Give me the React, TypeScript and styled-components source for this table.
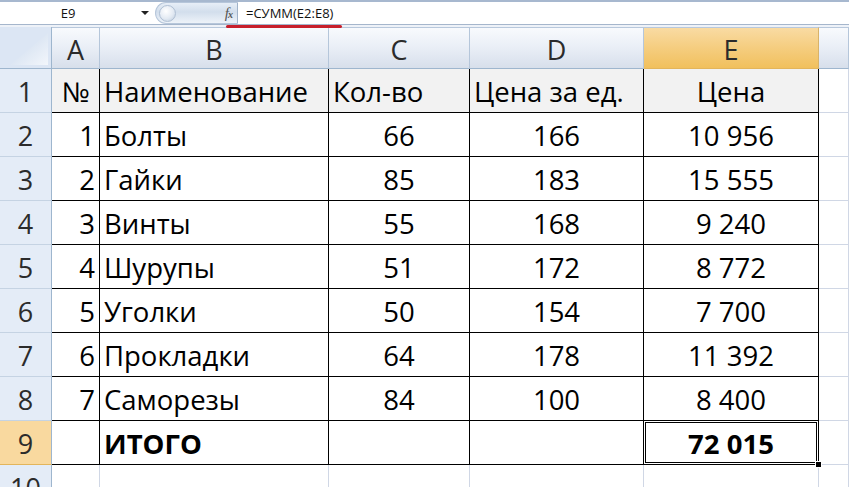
import React from "react";
import styled, { createGlobalStyle, css } from "styled-components";

const Global = createGlobalStyle`
  html, body { margin: 0; padding: 0; background: #fff; overflow: hidden; }
  #root { width: 849px; height: 487px; overflow: hidden; }
`;

const CELL_FONT = `"Open Sans", "Noto Sans", "DejaVu Sans", sans-serif`;
const UI_FONT = `"Open Sans", "Noto Sans", sans-serif`;

const Page = styled.div`
  width: 849px;
  height: 487px;
  display: flex;
  flex-direction: column;
  position: relative;
  overflow: hidden;
  background: #fff;
`;

const FormulaBar = styled.div`
  height: 25px;
  box-sizing: border-box;
  display: flex;
  align-items: stretch;
  border-top: 2px solid #a7b8cf;
  border-bottom: 1px solid #a5b6cc;
  background: #fff;
  flex-shrink: 0;
`;

const NameBox = styled.div`
  width: 136px;
  display: flex;
  align-items: center;
  justify-content: center;
  font-family: ${UI_FONT};
  font-size: 13px;
  color: #111;
`;

const DropArrow = styled.div`
  width: 18px;
  display: flex;
  align-items: center;
  justify-content: center;
  &::after {
    content: "";
    border-left: 4px solid transparent;
    border-right: 4px solid transparent;
    border-top: 4px solid #222;
  }
`;

const FxPill = styled.div`
  width: 83px;
  margin: 0 0 0 1px;
  box-sizing: border-box;
  border-radius: 12px 0 0 12px;
  border: 1px solid #b6c6da;
  border-right: 1px solid #9fb2c9;
  background: linear-gradient(to bottom, #e7eef7 0%, #d2deec 45%, #eef3f9 100%);
  display: flex;
  align-items: center;
  justify-content: space-between;
  padding: 0 5px 0 3px;
`;

const Knob = styled.div`
  width: 15px;
  height: 15px;
  border-radius: 50%;
  background: radial-gradient(circle at 40% 35%, #ffffff 0%, #e3eaf3 55%, #b9c8da 100%);
  border: 1px solid #b0c0d4;
`;

const Fx = styled.span`
  font-family: "Liberation Serif", "DejaVu Serif", serif;
  font-style: italic;
  font-size: 15px;
  color: #555;
  letter-spacing: -1px;
  & small {
    font-size: 10px;
    font-weight: bold;
  }
`;

const FormulaInput = styled.div`
  flex: 1;
  display: flex;
  align-items: center;
  padding-left: 8px;
  font-family: ${UI_FONT};
  font-size: 13px;
  color: #111;
`;

const Underline = styled.div`
  position: absolute;
  left: 226px;
  top: 25px;
  width: 116px;
  height: 3px;
  border-radius: 2px;
  background: #c81f2b;
`;

const Band = styled.div`
  height: 2px;
  background: #eef2f8;
  flex-shrink: 0;
`;

const Sheet = styled.div`
  display: grid;
  grid-template-columns: 52px 48px 229px 141px 174px 175px 1fr;
  grid-template-rows: 42px repeat(9, 44px) 44px;
`;

const Corner = styled.div`
  box-sizing: border-box;
  border-right: 1px solid #9eb6ce;
  border-bottom: 1px solid #9eb6ce;
  background: #dce6f4;
  display: flex;
  align-items: flex-end;
  justify-content: flex-end;
  padding: 3px;
`;

const ColHead = styled.div<{ $sel?: boolean }>`
  box-sizing: border-box;
  display: flex;
  align-items: center;
  justify-content: center;
  font-family: ${CELL_FONT};
  font-size: 27px;
  color: #2b2b2b;
  border-top: 1px solid #b8c8dc;
  border-right: 1px solid ${(p) => (p.$sel ? "#d8b36a" : "#b5c6da")};
  border-bottom: 1px solid ${(p) => (p.$sel ? "#e3b55b" : "#9eb6ce")};
  background: ${(p) =>
    p.$sel
      ? "linear-gradient(to bottom, #f9dba3 0%, #f5cd7f 50%, #f1c05d 100%)"
      : "linear-gradient(to bottom, #f8fafd 0%, #e9eef6 50%, #d7dfeb 100%)"};
  padding-top: 2px;
`;

const RowHead = styled.div<{ $sel?: boolean }>`
  box-sizing: border-box;
  display: flex;
  align-items: flex-end;
  justify-content: center;
  padding-bottom: 2px;
  font-family: ${CELL_FONT};
  font-size: 27px;
  line-height: 36px;
  color: #2b2b2b;
  border-right: 1px solid #9eb6ce;
  border-bottom: 1px solid ${(p) => (p.$sel ? "#e3b55b" : "#c5d3e3")};
  background: ${(p) => (p.$sel ? "#f9d99f" : "#e4ecf7")};
`;

type Align = "left" | "center" | "right";

const Cell = styled.div<{
  $align?: Align;
  $bold?: boolean;
  $shade?: boolean;
  $edgeR?: boolean;
  $edgeB?: boolean;
  $active?: boolean;
}>`
  box-sizing: border-box;
  position: relative;
  display: flex;
  align-items: flex-end;
  justify-content: ${(p) =>
    p.$align === "left" ? "flex-start" : p.$align === "right" ? "flex-end" : "center"};
  padding: 0 4px 2px 4px;
  font-family: ${CELL_FONT};
  font-size: 27.5px;
  line-height: 36px;
  color: #000;
  font-weight: ${(p) => (p.$bold ? 700 : 400)};
  white-space: nowrap;
  background: ${(p) => (p.$shade ? "#f2f2f2" : "#fff")};
  border-right: 1px solid ${(p) => (p.$edgeR ? "#000" : "#d0d7e5")};
  border-bottom: 1px solid ${(p) => (p.$edgeB ? "#000" : "#d0d7e5")};
  ${(p) =>
    p.$active &&
    css`
      box-shadow: inset 0 0 0 1px #fff, inset 0 0 0 2px #000;
    `}
`;

const FillHandle = styled.div`
  position: absolute;
  right: -4px;
  bottom: -4px;
  width: 5px;
  height: 5px;
  background: #000;
  border: 1px solid #fff;
  z-index: 2;
`;

const Triangle = () => (
  <svg width="38" height="32" viewBox="0 0 38 32">
    <defs>
      <linearGradient id="tri" x1="0" y1="0" x2="1" y2="1">
        <stop offset="0" stopColor="#c9d8ec" />
        <stop offset="1" stopColor="#f2f6fb" />
      </linearGradient>
    </defs>
    <polygon points="38,0 38,32 0,32" fill="url(#tri)" />
  </svg>
);

type Row = { n: number; a: string; b: string; c: string; d: string; e: string; bold?: boolean };

const rows: Row[] = [
  { n: 2, a: "1", b: "Болты", c: "66", d: "166", e: "10 956" },
  { n: 3, a: "2", b: "Гайки", c: "85", d: "183", e: "15 555" },
  { n: 4, a: "3", b: "Винты", c: "55", d: "168", e: "9 240" },
  { n: 5, a: "4", b: "Шурупы", c: "51", d: "172", e: "8 772" },
  { n: 6, a: "5", b: "Уголки", c: "50", d: "154", e: "7 700" },
  { n: 7, a: "6", b: "Прокладки", c: "64", d: "178", e: "11 392" },
  { n: 8, a: "7", b: "Саморезы", c: "84", d: "100", e: "8 400" },
  { n: 9, a: "", b: "ИТОГО", c: "", d: "", e: "72 015", bold: true },
];

const letters = ["A", "B", "C", "D", "E", "F"];

export default function App() {
  return (
    <>
      <Global />
      <Page>
        <FormulaBar>
          <NameBox>E9</NameBox>
          <DropArrow />
          <FxPill>
            <Knob />
            <Fx>
              f<small>x</small>
            </Fx>
          </FxPill>
          <FormulaInput>=СУММ(E2:E8)</FormulaInput>
        </FormulaBar>
        <Underline />
        <Band />
        <Sheet>
          <Corner>
            <Triangle />
          </Corner>
          {letters.map((l) => (
            <ColHead key={l} $sel={l === "E"}>
              {l === "F" ? "" : l}
            </ColHead>
          ))}

          <RowHead>1</RowHead>
          <Cell $shade $align="center" $edgeR $edgeB>№</Cell>
          <Cell $shade $align="left" $edgeR $edgeB>Наименование</Cell>
          <Cell $shade $align="left" $edgeR $edgeB>Кол-во</Cell>
          <Cell $shade $align="left" $edgeR $edgeB>Цена за ед.</Cell>
          <Cell $shade $align="center" $edgeR $edgeB>Цена</Cell>
          <Cell />

          {rows.map((r) => (
            <React.Fragment key={r.n}>
              <RowHead $sel={r.n === 9}>{r.n}</RowHead>
              <Cell $align="right" $edgeR $edgeB>{r.a}</Cell>
              <Cell $align="left" $edgeR $edgeB $bold={r.bold}>{r.b}</Cell>
              <Cell $align="center" $edgeR $edgeB>{r.c}</Cell>
              <Cell $align="center" $edgeR $edgeB>{r.d}</Cell>
              <Cell $align="center" $edgeR $edgeB $bold={r.bold} $active={r.n === 9}>
                {r.e}
                {r.n === 9 && <FillHandle />}
              </Cell>
              <Cell />
            </React.Fragment>
          ))}

          <RowHead>10</RowHead>
          <Cell />
          <Cell />
          <Cell />
          <Cell />
          <Cell />
          <Cell />
        </Sheet>
      </Page>
    </>
  );
}
